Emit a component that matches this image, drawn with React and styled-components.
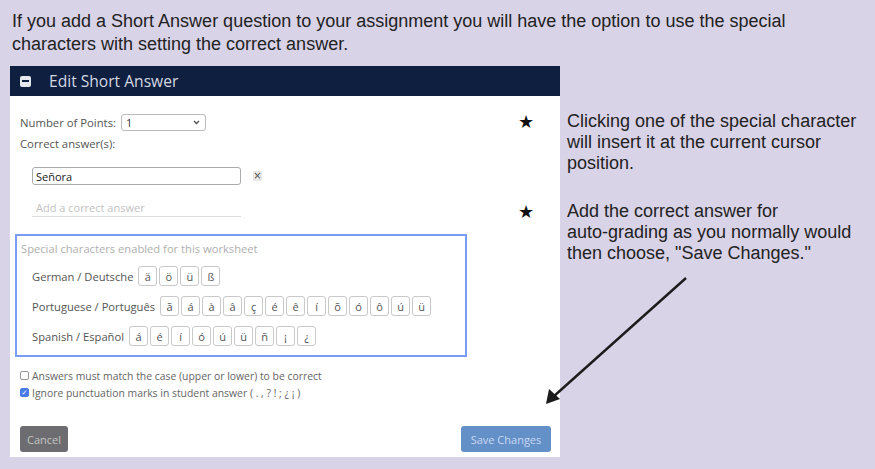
import styled, { createGlobalStyle } from "styled-components";

const GlobalStyle = createGlobalStyle`
  html, body {
    margin: 0;
    padding: 0;
    background: #d9d3e8;
  }
  body {
    width: 875px;
    height: 469px;
    overflow: hidden;
  }
`;

const Page = styled.div`
  position: relative;
  width: 875px;
  height: 469px;
  padding-top: 10px;
  box-sizing: border-box;
`;

const Intro = styled.p`
  margin: 0 0 10px 12px;
  width: 800px;
  font-family: "Liberation Sans", Arial, sans-serif;
  font-size: 18px;
  line-height: 23px;
  color: #222;
`;

const Main = styled.div`
  display: flex;
  align-items: flex-start;
`;

const Panel = styled.section`
  width: 550px;
  height: 391px;
  margin-left: 10px;
  background: #fff;
  display: flex;
  flex-direction: column;
  font-family: "Open Sans", "DejaVu Sans", sans-serif;
`;

const Header = styled.header`
  height: 30px;
  background: #0f1f3f;
  display: flex;
  align-items: center;
  padding-left: 10px;
  gap: 18px;
  color: #d4d8e2;
  font-size: 15.6px;
`;

const Collapse = styled.span`
  width: 11px;
  height: 11px;
  border-radius: 2px;
  background: #e6e8ee;
  display: flex;
  align-items: center;
  justify-content: center;
  &::after {
    content: "";
    width: 7px;
    height: 2px;
    background: #0f1f3f;
  }
`;

const Body = styled.div`
  flex: 1;
  display: flex;
  flex-direction: column;
  padding: 18px 9px 5px 10px;
  font-size: 11.3px;
  color: #555;
`;

const Row = styled.div`
  display: flex;
  align-items: center;
  gap: ${(p) => p.$gap ?? 5}px;
  margin-left: ${(p) => p.$indent || 0}px;
  margin-top: ${(p) => p.$top || 0}px;
  height: ${(p) => p.$h || 17}px;
`;

const Select = styled.div`
  width: 85px;
  height: 17px;
  box-sizing: border-box;
  border: 1px solid #bbb;
  border-radius: 3px;
  display: flex;
  align-items: center;
  justify-content: space-between;
  padding: 0 5px 0 4px;
  color: #333;
  font-size: 11px;
`;

const Chevron = styled.svg`
  width: 7px;
  height: 5px;
`;

const Input = styled.div`
  width: 209px;
  height: 18px;
  box-sizing: border-box;
  border: 1px solid #aaa;
  border-radius: 3px;
  display: flex;
  align-items: center;
  padding-left: 3px;
  color: #222;
  font-size: 11px;
`;

const Remove = styled.span`
  width: 9px;
  height: 10px;
  margin-left: 12px;
  background: #e8e8e8;
  color: #555;
  font-size: 10px;
  line-height: 10px;
  text-align: center;
  font-family: "DejaVu Sans", sans-serif;
`;

const Placeholder = styled.div`
  width: 209px;
  height: 18px;
  box-sizing: border-box;
  border-bottom: 1px solid #ddd;
  padding-left: 4px;
  display: flex;
  align-items: center;
  color: #c2c2c2;
  font-size: 11px;
`;

const CharBox = styled.div`
  margin: 17px 0 0 -5px;
  width: 452px;
  height: 123px;
  box-sizing: border-box;
  border: 2px solid #7b9cf5;
  padding: 6px 4px 0 4px;
  display: flex;
  flex-direction: column;
`;

const BoxTitle = styled.div`
  color: #b0b0b0;
  font-size: 11.2px;
  height: 14px;
  line-height: 14px;
`;

const CharRow = styled.div`
  display: flex;
  align-items: center;
  gap: 5px;
  margin: 10px 0 0 11px;
  height: 20px;
`;

const Lang = styled.span`
  color: #555;
  font-size: 11.2px;
`;

const Keys = styled.div`
  display: flex;
  gap: 2px;
`;

const Key = styled.span`
  width: 19px;
  height: 20px;
  box-sizing: border-box;
  border: 1px solid #c9c9c9;
  border-radius: 3px;
  display: flex;
  align-items: center;
  justify-content: center;
  color: #555;
  font-size: 11px;
`;

const Check = styled.div`
  display: flex;
  align-items: center;
  gap: 3px;
  height: 17px;
  margin-top: ${(p) => p.$top}px;
  color: #666;
  font-size: 10.4px;
`;

const Box = styled.span`
  width: 9px;
  height: 9px;
  box-sizing: border-box;
  border-radius: 2px;
  border: 1px solid ${(p) => (p.$on ? "#4a7be8" : "#999")};
  background: ${(p) => (p.$on ? "#4a7be8" : "#fff")};
  color: #fff;
  font-size: 7px;
  line-height: 7px;
  text-align: center;
`;

const Footer = styled.div`
  margin-top: auto;
  display: flex;
  justify-content: space-between;
  align-items: center;
`;

const Button = styled.button`
  height: 26px;
  width: ${(p) => p.$w}px;
  border: none;
  border-radius: 3px;
  padding: 0;
  font-family: "Open Sans", sans-serif;
  font-size: 11px;
  background: ${(p) => (p.$primary ? "#6490c8" : "#6d6d71")};
  color: ${(p) => (p.$primary ? "#c9d8f2" : "#c4c4c4")};
`;

const Notes = styled.div`
  margin-left: -42px;
  padding-top: 45px;
  display: flex;
  flex-direction: column;
  gap: 27px;
`;

const Note = styled.div`
  display: grid;
  grid-template-columns: 49px 1fr;
  font-family: "Liberation Sans", Arial, sans-serif;
  font-size: 18px;
  line-height: 21px;
  color: #222;
`;

const Star = styled.span`
  font-family: "DejaVu Sans", sans-serif;
  font-size: 18px;
  color: #111;
`;

const Arrow = styled.svg`
  position: absolute;
  left: 0;
  top: 0;
  pointer-events: none;
`;

const chevron = (
  <Chevron viewBox="0 0 7 5">
    <path d="M1 1l2.5 2.5L6 1" stroke="#555" strokeWidth="1.4" fill="none" />
  </Chevron>
);

const langs = [
  ["German / Deutsche", ["ä", "ö", "ü", "ß"]],
  ["Portuguese / Português", ["ã", "á", "à", "â", "ç", "é", "ê", "í", "õ", "ó", "ô", "ú", "ü"]],
  ["Spanish / Español", ["á", "é", "í", "ó", "ú", "ü", "ñ", "¡", "¿"]],
];

export default function App() {
  return (
    <Page>
      <GlobalStyle />
      <Intro>
        If you add a Short Answer question to your assignment you will have the option to use the special
        characters with setting the correct answer.
      </Intro>
      <Main>
        <Panel>
          <Header>
            <Collapse />
            Edit Short Answer
          </Header>
          <Body>
            <Row>
              Number of Points:
              <Select>
                1{chevron}
              </Select>
            </Row>
            <Row $top={4}>Correct answer(s):</Row>
            <Row $indent={12} $top={15} $h={18} $gap={0}>
              <Input>Señora</Input>
              <Remove>×</Remove>
            </Row>
            <Row $indent={12} $top={14} $h={18}>
              <Placeholder>Add a correct answer</Placeholder>
            </Row>
            <CharBox>
              <BoxTitle>Special characters enabled for this worksheet</BoxTitle>
              {langs.map(([name, chars]) => (
                <CharRow key={name}>
                  <Lang>{name}</Lang>
                  <Keys>
                    {chars.map((c, j) => (
                      <Key key={j}>{c}</Key>
                    ))}
                  </Keys>
                </CharRow>
              ))}
            </CharBox>
            <Check $top={10}>
              <Box />
              Answers must match the case (upper or lower) to be correct
            </Check>
            <Check $top={0}>
              <Box $on>✓</Box>
              Ignore punctuation marks in student answer ( . , ? ! ; ¿ ¡ )
            </Check>
            <Footer>
              <Button $w={48}>Cancel</Button>
              <Button $w={90} $primary>Save Changes</Button>
            </Footer>
          </Body>
        </Panel>
        <Notes>
          <Note>
            <Star>★</Star>
            <span>
              Clicking one of the special character
              <br />
              will insert it at the current cursor
              <br />
              position.
            </span>
          </Note>
          <Note>
            <Star>★</Star>
            <span>
              Add the correct answer for
              <br />
              auto-grading as you normally would
              <br />
              then choose, "Save Changes."
            </span>
          </Note>
        </Notes>
      </Main>
      <Arrow width="875" height="469" viewBox="0 0 875 469">
        <line x1="686" y1="278" x2="553" y2="397" stroke="#1c1c1c" strokeWidth="2.4" />
        <polygon points="546,404 549,389 560,399" fill="#1c1c1c" />
      </Arrow>
    </Page>
  );
}
